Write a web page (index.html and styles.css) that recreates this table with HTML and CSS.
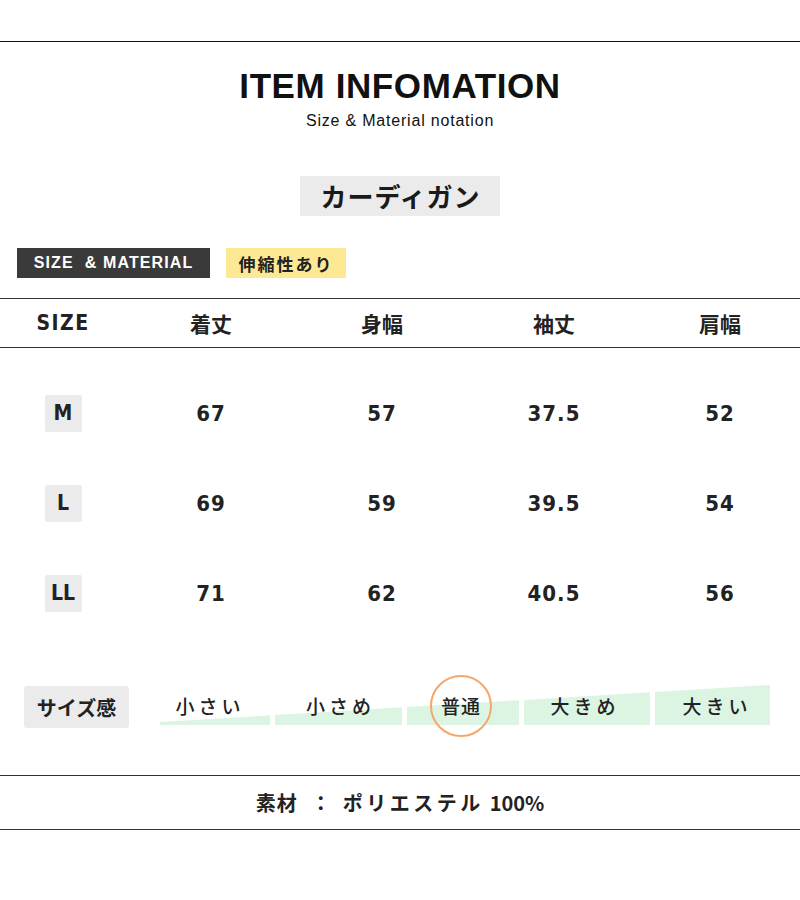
FILE: index.html
```html
<!DOCTYPE html>
<html lang="ja">
<head>
<meta charset="utf-8">
<title>ITEM INFOMATION</title>
<link rel="stylesheet" href="styles.css">
</head>
<body>
<div class="page">
  <header class="head">
    <h1 class="title">ITEM INFOMATION</h1>
    <p class="subtitle">Size &amp; Material notation</p>
    <div class="item-name">カーディガン</div>
  </header>

  <div class="tags">
    <span class="tag tag-dark">SIZE&nbsp; &amp; MATERIAL</span>
    <span class="tag tag-yellow">伸縮性あり</span>
  </div>

  <div class="table">
    <div class="row thead">
      <div class="cell head-en">SIZE</div>
      <div class="cell head-ja">着丈</div>
      <div class="cell head-ja">身幅</div>
      <div class="cell head-ja">袖丈</div>
      <div class="cell head-ja">肩幅</div>
    </div>
    <div class="tbody">
      <div class="row trow">
        <div class="cell"><span class="size-badge">M</span></div>
        <div class="cell num">67</div>
        <div class="cell num">57</div>
        <div class="cell num">37.5</div>
        <div class="cell num">52</div>
      </div>
      <div class="row trow">
        <div class="cell"><span class="size-badge">L</span></div>
        <div class="cell num">69</div>
        <div class="cell num">59</div>
        <div class="cell num">39.5</div>
        <div class="cell num">54</div>
      </div>
      <div class="row trow">
        <div class="cell"><span class="size-badge">LL</span></div>
        <div class="cell num">71</div>
        <div class="cell num">62</div>
        <div class="cell num">40.5</div>
        <div class="cell num">56</div>
      </div>
    </div>
  </div>

  <div class="feel">
    <div class="feel-label">サイズ感</div>
    <div class="scale">
      <svg class="scale-bg" width="610" height="40" viewBox="0 0 610 40" aria-hidden="true">
        <polygon points="0,37 110,30.3 110,40 0,40" />
        <polygon points="115,30 242,22.3 242,40 115,40" />
        <polygon points="247,22 359,15.2 359,40 247,40" />
        <polygon points="364,14.9 490,7.3 490,40 364,40" />
        <polygon points="495,7 610,0 610,40 495,40" />
      </svg>
      <div class="scale-cells">
        <div class="scale-cell c1"><span class="scale-text">小さい</span></div>
        <div class="scale-cell c2"><span class="scale-text">小さめ</span></div>
        <div class="scale-cell c3"><span class="scale-text selected">普通</span></div>
        <div class="scale-cell c4"><span class="scale-text">大きめ</span></div>
        <div class="scale-cell c5"><span class="scale-text">大きい</span></div>
      </div>
    </div>
  </div>

  <div class="material">
    <span class="mat-key">素材</span><span class="mat-sep">：</span><span class="mat-val">ポリエステル</span><span class="mat-pct">100%</span>
  </div>
</div>
</body>
</html>
```

FILE: styles.css
```css
html, body {
  margin: 0;
  padding: 0;
  background: #ffffff;
}

body {
  font-family: "Noto Sans CJK JP", "Noto Sans", sans-serif;
  color: #222222;
}

.page {
  width: 800px;
}

.head {
  margin-top: 41px;
  border-top: 1px solid #111111;
  padding-top: 26px;
  text-align: center;
}

.title {
  margin: 0;
  font-family: "Liberation Sans", Arial, sans-serif;
  font-weight: 700;
  font-size: 35px;
  line-height: 1;
  letter-spacing: 0.6px;
  color: #111111;
}

.subtitle {
  margin: 10px 0 0;
  font-family: "Liberation Sans", Arial, sans-serif;
  font-size: 16px;
  line-height: 1;
  letter-spacing: 0.8px;
  color: #111111;
}

.item-name {
  display: inline-block;
  margin-top: 47px;
  height: 40px;
  line-height: 40px;
  padding: 0 19px 0 20px;
  background: #ebebeb;
  font-family: "Noto Sans CJK JP", sans-serif;
  font-weight: 700;
  font-size: 26px;
  letter-spacing: 1px;
  color: #1a1a1a;
}

.tags {
  display: flex;
  gap: 16px;
  margin-top: 32px;
  padding-left: 17px;
}

.tag {
  display: flex;
  align-items: center;
  justify-content: center;
  height: 30px;
}

.tag-dark {
  width: 193px;
  background: #3a3a3a;
  color: #ffffff;
  font-family: "Liberation Sans", Arial, sans-serif;
  font-weight: 700;
  font-size: 16px;
  letter-spacing: 1.1px;
}

.tag-yellow {
  width: 120px;
  background: #fde994;
  color: #222222;
  font-family: "Noto Sans CJK JP", sans-serif;
  font-weight: 700;
  font-size: 17px;
  letter-spacing: 2px;
}

.table {
  margin-top: 20px;
  border-top: 1px solid #333333;
}

.row {
  display: grid;
  grid-template-columns: 126px 170px 172px 172px 160px;
}

.cell {
  display: flex;
  align-items: center;
  justify-content: center;
}

.thead {
  height: 48px;
  border-bottom: 1px solid #333333;
}

.head-en {
  font-family: "DejaVu Sans Condensed", "DejaVu Sans", sans-serif;
  font-stretch: condensed;
  font-weight: 700;
  font-size: 21px;
  letter-spacing: 1.5px;
  color: #222222;
}

.head-ja {
  font-family: "Noto Sans CJK JP", sans-serif;
  font-weight: 700;
  font-size: 21px;
  color: #222222;
}

.tbody {
  padding-top: 20px;
}

.trow {
  height: 90px;
}

.num {
  font-family: "DejaVu Sans Condensed", "DejaVu Sans", sans-serif;
  font-stretch: condensed;
  font-weight: 700;
  font-size: 22px;
  letter-spacing: 1px;
  color: #222222;
}

.size-badge {
  display: flex;
  align-items: center;
  justify-content: center;
  width: 37px;
  height: 37px;
  background: #ebebeb;
  border-radius: 2px;
  font-family: "DejaVu Sans Condensed", "DejaVu Sans", sans-serif;
  font-stretch: condensed;
  font-weight: 700;
  font-size: 21px;
  color: #222222;
}

.feel {
  display: flex;
  align-items: flex-start;
  margin-top: 47px;
}

.feel-label {
  display: flex;
  align-items: center;
  justify-content: center;
  width: 105px;
  height: 42px;
  margin-top: 1px;
  margin-left: 24px;
  background: #ebebeb;
  border-radius: 3px;
  font-family: "Noto Sans CJK JP", sans-serif;
  font-weight: 700;
  font-size: 20px;
  color: #222222;
}

.scale {
  position: relative;
  width: 610px;
  height: 40px;
  margin-left: 31px;
}

.scale-bg {
  position: absolute;
  left: 0;
  top: 0;
  fill: #dcf5e3;
}

.scale-cells {
  position: relative;
  display: flex;
  gap: 5px;
  height: 40px;
}

.scale-cell {
  display: flex;
  align-items: center;
  justify-content: center;
  padding-top: 1px;
  box-sizing: border-box;
}

.c1 { width: 110px; padding-right: 14px; }
.c2 { width: 127px; }
.c3 { width: 112px; padding-right: 4px; }
.c4 { width: 126px; padding-right: 8px; }
.c5 { width: 115px; padding-left: 5px; }

.scale-text {
  font-family: "Noto Sans CJK JP", sans-serif;
  font-weight: 500;
  font-size: 19px;
  letter-spacing: 4px;
  margin-right: -4px;
  color: #222222;
  white-space: nowrap;
}

.scale-text.selected {
  display: flex;
  align-items: center;
  justify-content: center;
  width: 58px;
  height: 58px;
  margin: 0;
  border: 2px solid #f5a76b;
  border-radius: 50%;
  letter-spacing: 1px;
  flex-shrink: 0;
}

.material {
  margin-top: 47px;
  height: 53px;
  border-top: 1px solid #333333;
  border-bottom: 1px solid #333333;
  display: flex;
  align-items: center;
  justify-content: center;
  font-family: "Noto Sans CJK JP", sans-serif;
  font-weight: 700;
  font-size: 20px;
  color: #222222;
}

.mat-key {
  letter-spacing: 1px;
}

.mat-sep {
  margin: 0 12px 0 13px;
}

.mat-val {
  letter-spacing: 3.5px;
  margin-right: 6px;
}

.mat-pct {
  letter-spacing: 0;
}
```
